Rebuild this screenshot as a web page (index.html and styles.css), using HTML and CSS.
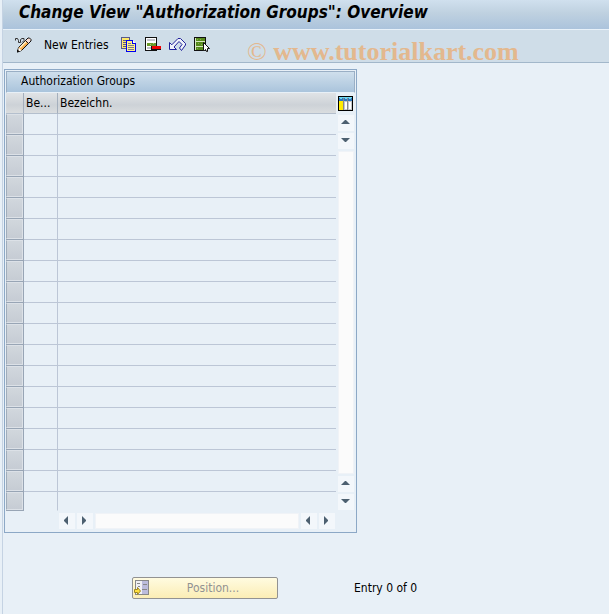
FILE: index.html
```html
<!DOCTYPE html>
<html lang="en">
<head>
<meta charset="utf-8">
<title>Change View "Authorization Groups": Overview</title>
<link rel="stylesheet" href="styles.css">
</head>
<body>
<div class="app">
  <header class="titlebar"><h1>Change View "Authorization Groups": Overview</h1></header>
  <div class="toolbar" role="toolbar" aria-label="Application toolbar">
    <button class="tool" aria-label="Display or change">
      <svg class="icon" width="17" height="16" viewBox="0 0 17 16">
        <path d="M.5 3.500V1.500h2l1 2v2h2v-3l1.500-1h2v2l-2 2" fill="none" stroke="#333"/>
        <path d="M3.500 10.500l7-7 3 3-7 7-4 1.500z" fill="#f8b050" stroke="#111"/>
        <path d="M5 10.500l6-6" stroke="#fff3d0" stroke-width="1.500" fill="none"/>
        <path d="M10.500 3.500l2.500-2.500h1.500L16 2.500V4l-2.500 2.500z" fill="#f8dcd0" stroke="#111"/>
        <path d="M3.500 10.500l3 3-3 1z" fill="#fff"/>
        <path d="M2 15.500v-3l3 2z" fill="#111"/>
      </svg>
    </button>
    <button class="tool text">New Entries</button>
    <button class="tool" aria-label="Copy as">
      <svg class="icon" width="16" height="16" viewBox="0 0 16 16" shape-rendering="crispEdges">
        <path d="M.5.5h8v11h-8z" fill="#ffe96b" stroke="#5a5a8a"/>
        <path d="M2 3.500h4M2 5.500h4M2 7.500h4M2 9.500h4" stroke="#5a5a8a"/>
        <path d="M5.500 3.500h6l3 3v8h-9z" fill="#fff08a" stroke="#0000f0"/>
        <path d="M11.500 3.500v3h3" fill="#fff" stroke="#0000f0"/>
        <path d="M7 6.500h3M7 8.500h6M7 10.500h6M7 12.500h6" stroke="#7c7c90"/>
      </svg>
    </button>
    <button class="tool" aria-label="Delete">
      <svg class="icon" width="16" height="16" viewBox="0 0 16 16" shape-rendering="crispEdges">
        <path d="M.5.5h11v13H.5z" fill="#fff" stroke="#111"/>
        <path d="M2 2h8v2H2z" fill="#c4c4cc"/>
        <path d="M2 6h9v3H2z" fill="#6a9a2a"/>
        <path d="M5 7h1v1h-1zM8 6h1v1H8z" fill="#a8cc70"/>
        <path d="M2 10h4v2H2z" fill="#c4c4cc"/>
        <path d="M6 9h10v4H6z" fill="#111"/>
        <path d="M7 9h9v3H7z" fill="#f00000"/>
      </svg>
    </button>
    <button class="tool" aria-label="Undo">
      <svg class="icon" width="17" height="16" viewBox="0 0 17 16">
        <path d="M.5 5.500v7h7l-2.500-2.500 5-5.500 3 3-2.500 3.500 2 2.500 4-5.500v-1.500L11.500 1.500H9L2.800 7.800z" fill="#f0f3fa" stroke="#20209a"/>
      </svg>
    </button>
    <button class="tool" aria-label="Select all">
      <svg class="icon" width="16" height="16" viewBox="0 0 16 16" shape-rendering="crispEdges">
        <path d="M.5.5h11v13H.5z" fill="#d8e8c0" stroke="#111"/>
        <path d="M2 1h9v3H2zM2 5h9v4H2zM2 10h9v3H2z" fill="#568a1c"/>
        <path d="M3 2h1v1H3zM6 2h1v1H6zM4 6h1v1H4zM7 7h1v1H7zM3 11h1v1H3z" fill="#86b04c"/>
        <path d="M9.500 5.500v8h1l1-1 1 2h1v-3h2z" fill="#fff" stroke="#111" shape-rendering="auto"/>
      </svg>
    </button>
    <span class="watermark"><span class="mark">©</span> www.tutorialkart.com</span>
  </div>

  <main>
    <section class="panel">
      <h2>Authorization Groups</h2>
      <div class="body">
        <table>
          <thead>
            <tr><th class="sel" aria-label="Selection"></th><th class="code">Be...</th><th class="name">Bezeichn.</th></tr>
          </thead>
          <tbody>
            <tr><td class="sel"><button aria-label="Row 1"></button></td><td></td><td></td></tr>
            <tr><td class="sel"><button aria-label="Row 2"></button></td><td></td><td></td></tr>
            <tr><td class="sel"><button aria-label="Row 3"></button></td><td></td><td></td></tr>
            <tr><td class="sel"><button aria-label="Row 4"></button></td><td></td><td></td></tr>
            <tr><td class="sel"><button aria-label="Row 5"></button></td><td></td><td></td></tr>
            <tr><td class="sel"><button aria-label="Row 6"></button></td><td></td><td></td></tr>
            <tr><td class="sel"><button aria-label="Row 7"></button></td><td></td><td></td></tr>
            <tr><td class="sel"><button aria-label="Row 8"></button></td><td></td><td></td></tr>
            <tr><td class="sel"><button aria-label="Row 9"></button></td><td></td><td></td></tr>
            <tr><td class="sel"><button aria-label="Row 10"></button></td><td></td><td></td></tr>
            <tr><td class="sel"><button aria-label="Row 11"></button></td><td></td><td></td></tr>
            <tr><td class="sel"><button aria-label="Row 12"></button></td><td></td><td></td></tr>
            <tr><td class="sel"><button aria-label="Row 13"></button></td><td></td><td></td></tr>
            <tr><td class="sel"><button aria-label="Row 14"></button></td><td></td><td></td></tr>
            <tr><td class="sel"><button aria-label="Row 15"></button></td><td></td><td></td></tr>
            <tr><td class="sel"><button aria-label="Row 16"></button></td><td></td><td></td></tr>
            <tr><td class="sel"><button aria-label="Row 17"></button></td><td></td><td></td></tr>
            <tr><td class="sel"><button aria-label="Row 18"></button></td><td></td><td></td></tr>
            <tr><td class="sel"><button aria-label="Row 19"></button></td><td></td><td></td></tr>
          </tbody>
        </table>
        <div class="side">
          <button class="config" aria-label="Configuration">
            <svg width="15" height="15" viewBox="0 0 15 15" shape-rendering="crispEdges">
              <path d="M0 0h15v15H0z" fill="#000"/>
              <path d="M1 1h13v13H1z" fill="#c4c8cc"/>
              <path d="M1 1h13v1H1z" fill="#70d8f0"/>
              <path d="M1 2h13v3H1z" fill="#2a78c0"/>
              <path d="M1 5h4v9H1z" fill="#ffec00"/>
              <path d="M7 6h2v7H7zM11 6h2v7h-2z" fill="#fff"/>
              <path d="M5.500 2v12M9.500 2v12" stroke="#888"/>
              <path d="M2 2h2v1H2zM7 2h2v1H7zM11 2h2v1h-2z" fill="#70d8f0"/>
            </svg>
          </button>
          <div class="scroll vertical">
            <button class="arrow" aria-label="Page up"><svg width="16" height="16" viewBox="0 0 16 16"><path d="M3 9l4-4h1l4 4z"/></svg></button>
            <button class="arrow" aria-label="Line down"><svg width="16" height="16" viewBox="0 0 16 16"><path d="M3 5h9L8 9H7z"/></svg></button>
            <div class="track"></div>
            <button class="arrow" aria-label="Line up"><svg width="16" height="16" viewBox="0 0 16 16"><path d="M3 9l4-4h1l4 4z"/></svg></button>
            <button class="arrow" aria-label="Page down"><svg width="16" height="16" viewBox="0 0 16 16"><path d="M3 5h9L8 9H7z"/></svg></button>
          </div>
        </div>
      </div>
      <div class="scroll horizontal">
        <button class="arrow" aria-label="First column"><svg width="16" height="16" viewBox="0 0 16 16"><path d="M9 3v9L5 8V7z"/></svg></button>
        <button class="arrow" aria-label="Column right"><svg width="16" height="16" viewBox="0 0 16 16"><path d="M5 3v9l4-4V7z"/></svg></button>
        <div class="track"></div>
        <button class="arrow" aria-label="Column left"><svg width="16" height="16" viewBox="0 0 16 16"><path d="M9 3v9L5 8V7z"/></svg></button>
        <button class="arrow" aria-label="Last column"><svg width="16" height="16" viewBox="0 0 16 16"><path d="M5 3v9l4-4V7z"/></svg></button>
      </div>
    </section>
    <div class="footer">
      <button class="position" disabled>
        <svg width="16" height="16" viewBox="0 0 16 16" shape-rendering="crispEdges">
          <path d="M1.500.5h13v14h-13z" fill="#f0f0f4" stroke="#888"/>
          <path d="M8 1h6v13H8z" fill="#bcbcdc"/>
          <path d="M3 3.500h3M4 6.500h2M9 4.500h4M8 9.500h5" stroke="#888"/>
          <path d="M0.500 9.500h3v-2l3 3.500-3 3.500v-2h-3z" fill="#ffe040" stroke="#a08820" shape-rendering="auto"/>
        </svg>
        <span>Position...</span>
      </button>
      <span>Entry 0 of 0</span>
    </div>
  </main>
</div>
</body>
</html>
```
FILE: styles.css
```css
* { box-sizing: border-box; }

body {
  margin: 0;
  background: #e8f0f7;
  color: #000;
  font: 12px/16px "DejaVu Sans Condensed", "DejaVu Sans", sans-serif;
}

button {
  margin: 0;
  padding: 0;
  border: 0;
  background: none;
  color: inherit;
  font: inherit;
}

svg { display: block; }

.app {
  min-height: 100vh;
  margin-left: 2px;
  border-left: 1px solid #c5d3e3;
}

.titlebar {
  height: 30px;
  padding: 2px 16px;
  border-bottom: 1px solid #e8f1f9;
  background: linear-gradient(#d0e0ee, #bfd1e0 45%, #abc3dc);
}

h1 {
  margin: 0;
  font-size: 17px;
  line-height: 20px;
  font-style: italic;
}

.toolbar {
  position: relative;
  display: flex;
  align-items: center;
  gap: 8px;
  height: 33px;
  padding: 0 12px 2px;
  border-bottom: 1px solid #a2b7ca;
  background: #cfdde8;
}

.text { padding: 0 4px; }

.watermark {
  position: absolute;
  left: 244px;
  top: 6px;
  color: #e3b88e;
  font: bold 26px/32px "Liberation Serif", serif;
  white-space: nowrap;
}

.mark { font-weight: normal; }

main { padding: 6px 1px; }

.panel {
  width: fit-content;
  padding: 1px;
  border: 1px solid #8ca8c6;
}

h2 {
  height: 22px;
  margin: 0;
  padding: 0 14px;
  border: 1px solid #9aafc5;
  border-bottom-color: #e8f0f7;
  background: linear-gradient(#cfdfec, #aac4dc);
  font-size: 12px;
  font-weight: normal;
  line-height: 18px;
}

.body { display: flex; }

table { border-collapse: separate; border-spacing: 0; }

th {
  height: 21px;
  padding: 0 2px;
  border-right: 1px solid #a4afbd;
  border-bottom: 1px solid #b4bfcd;
  background: linear-gradient(#e0e3e6, #cdd2d7 60%, #dadddf);
  font-weight: normal;
  text-align: left;
}

th:last-child { border-right: 0; }

td {
  height: 21px;
  padding: 0;
  border-right: 1px solid #bcc6d6;
  border-bottom: 1px solid #bcc6d6;
}

td:last-child { border-right: 0; }

tr:last-child td { height: 19px; border-bottom-color: transparent; }

td.sel, tr:last-child td.sel { border-color: #98a5b5; }

.sel { width: 18px; }

.sel button {
  display: block;
  width: 17px;
  height: 20px;
  border: 1px solid #dce1e7;
  border-left-color: #a0adbb;
  background: linear-gradient(#d1d7dd, #c6ccd4);
}

tr:last-child .sel button { height: 18px; }

.code { width: 34px; }

.name { width: 278px; }

.side {
  display: flex;
  flex-direction: column;
  padding: 0 1px 0 2px;
}

.config {
  height: 20px;
  padding: 2px 0;
}

.scroll {
  display: flex;
  gap: 2px;
}

.vertical {
  flex: 1;
  flex-direction: column;
  padding: 2px 0 1px;
}

.horizontal {
  padding: 2px 20px 2px 53px;
}

.arrow {
  width: 16px;
  height: 16px;
  border: 0;
  background: #f3f7fb;
  fill: #4d6070;
}

.track {
  flex: 1;
  border: 1px solid #f0f3f7;
  background: #fbfbfb;
}

.footer {
  display: flex;
  align-items: center;
  gap: 76px;
  margin-top: 44px;
  padding-left: 128px;
}

.position {
  display: flex;
  align-items: center;
  width: 146px;
  height: 22px;
  padding: 0 1px;
  border: 1px solid #929292;
  border-radius: 2px;
  background: linear-gradient(#fffbe0, #fbedb5);
  color: #929292;
}

.position span {
  flex: 1;
  text-align: center;
}
```
